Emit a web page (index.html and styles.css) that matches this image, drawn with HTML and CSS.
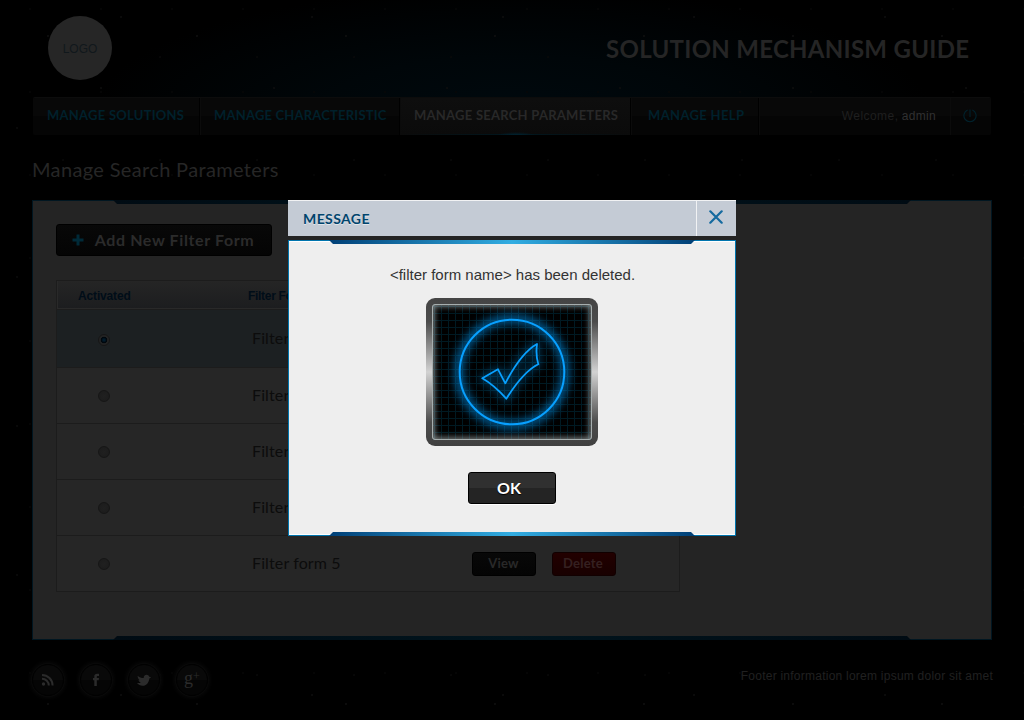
FILE: index.html
```html
<!DOCTYPE html>
<html lang="en">
<head>
<meta charset="utf-8">
<title>Solution Mechanism Guide</title>
<link rel="stylesheet" href="styles.css">
</head>
<body>
<div class="page">
  <header class="header">
    <div class="logo">LOGO</div>
    <h1 class="site-title">SOLUTION MECHANISM GUIDE</h1>
  </header>
  <nav class="nav">
    <a class="nav-item nav-solutions"><span>MANAGE SOLUTIONS</span></a>
    <a class="nav-item nav-characteristic"><span>MANAGE CHARACTERISTIC</span></a>
    <a class="nav-item nav-search active"><span>MANAGE SEARCH PARAMETERS</span></a>
    <a class="nav-item nav-help"><span>MANAGE HELP</span></a>
    <div class="welcome"><span class="greet">Welcome,</span> <b>admin</b></div>
    <a class="power" aria-label="Log out"><svg width="14" height="14" viewBox="0 0 14 14" fill="none" stroke="#00222d" stroke-width="1.1"><path d="M4.6 1.1A6.1 6.1 0 1 0 9.4 1.1M7 .5V8"/></svg></a>
  </nav>
  <h2 class="page-title">Manage Search Parameters</h2>
  <main class="panel">
    <button class="btn add"><svg width="12" height="12" viewBox="0 0 12 12"><path d="M4.500 .5h3v4H11.500v3H7.500v4h-3v-4H.5v-3h4z" fill="#002a38"/></svg><span>Add New Filter Form</span></button>
    <div class="table">
      <div class="row head"><span>Activated</span><span>Filter Form</span></div>
      <div class="row selected"><i class="radio on"></i><span class="name">Filter form 1</span></div>
      <div class="row"><i class="radio"></i><span class="name">Filter form 2</span></div>
      <div class="row"><i class="radio"></i><span class="name">Filter form 3</span></div>
      <div class="row"><i class="radio"></i><span class="name">Filter form 4</span></div>
      <div class="row last"><i class="radio"></i><span class="name">Filter form 5</span><button class="btn small view">View</button><button class="btn small delete">Delete</button></div>
    </div>
  </main>
  <footer class="footer">
    <div class="social">
      <a class="circle" aria-label="RSS"><svg width="14" height="14" viewBox="0 0 14 14"><circle cx="2.500" cy="11" r="1.700" fill="#2b2b2b"/><path d="M1 5.700A6.800 6.800 0 0 1 7.800 12.500M1 1.900A10.600 10.600 0 0 1 11.600 12.500" fill="none" stroke="#2b2b2b" stroke-width="2"/></svg></a>
      <a class="circle" aria-label="Facebook"><svg width="14" height="14" viewBox="0 0 14 14"><path d="M5.300 13V7.300H4V5h1.300V3.700C5.300 1.700 6.300.8 8.200.8H10V3H8.700C8 3 7.800 3.300 7.800 3.900V5H10L9.700 7.300H7.800V13z" fill="#2b2b2b"/></svg></a>
      <a class="circle" aria-label="Twitter"><svg width="16" height="14" viewBox="0 0 16 14"><path d="M.8 9.800c1.600.5 3 .3 4-.6C3.400 9 2.700 8.200 2.500 7.200h1.200C2.600 6.300 1.700 4.700 1.600 2.700 3.300 4.300 5.400 5 7.700 5.100 7.500 3.100 8.800 1.700 10.600 1.700c1.200 0 2.300.8 2.700 2l1.900.9-1.900.8C13 9.400 10.500 12.700 6.700 12.700 4.400 12.700 2.300 11.600.8 9.800z" fill="#2b2b2b"/></svg></a>
      <a class="circle gplus" aria-label="Google Plus"><span>g<sup>+</sup></span></a>
    </div>
    <p class="footnote">Footer information lorem ipsum dolor sit amet</p>
  </footer>
</div>

<div class="overlay">
  <section class="dialog" role="dialog">
    <div class="dialog-head">
      <h3>MESSAGE</h3>
      <a class="close" aria-label="Close"><svg width="14" height="14" viewBox="0 0 14 14"><path d="M1.300 1.300L12.700 12.700M12.700 1.300L1.300 12.700" stroke="#146a9f" stroke-width="2.200" fill="none" stroke-linecap="round"/></svg></a>
    </div>
    <div class="dialog-body">
      <p>&lt;filter form name&gt; has been deleted.</p>
      <svg class="monitor" width="172" height="148" viewBox="0 0 172 148">
        <defs>
          <linearGradient id="steel" x1="0" y1="0" x2="0" y2="1"><stop offset="0" stop-color="#444"/><stop offset=".16" stop-color="#4b4b4b"/><stop offset=".5" stop-color="#d2d2d2"/><stop offset=".84" stop-color="#4b4b4b"/><stop offset="1" stop-color="#404040"/></linearGradient>
          <pattern id="grid" x="1" y="1" width="7" height="7" patternUnits="userSpaceOnUse"><path d="M0 .5H7M.5 0V7" stroke="#001a23" stroke-width="1"/></pattern>
          <filter id="soft" x="-30%" y="-30%" width="160%" height="160%"><feGaussianBlur stdDeviation="5"/></filter>
          <filter id="edge" x="-10%" y="-10%" width="120%" height="120%"><feGaussianBlur stdDeviation="3"/></filter>
          <clipPath id="screen"><rect x="6" y="6" width="160" height="136" rx="3"/></clipPath>
        </defs>
        <rect width="172" height="148" rx="9" fill="url(#steel)"/>
        <g clip-path="url(#screen)">
          <rect x="6" y="6" width="160" height="136" fill="#000"/>
          <rect x="6" y="6" width="160" height="136" fill="url(#grid)"/>
          <circle cx="86" cy="74" r="53" fill="none" stroke="#0090e8" stroke-width="8" filter="url(#soft)" opacity=".72"/>
          <path d="M56.300 80.300L72 71.300L79.300 85.300Q95 55 111 46Q109.500 57 112.300 66.300Q98 73 80.300 100.700Q68 87 56.300 80.300Z" fill="none" stroke="#0090e8" stroke-width="4" filter="url(#soft)" opacity=".6"/>
          <rect x="5" y="5" width="162" height="138" rx="4" fill="none" stroke="#adb5b5" stroke-width="6" filter="url(#edge)" opacity=".85"/>
        </g>
        <rect x="6.500" y="6.500" width="159" height="135" rx="2.500" fill="none" stroke="#a6aeae"/>
        <circle cx="86" cy="74" r="52.300" fill="none" stroke="#08a0ff" stroke-width="2"/>
        <path d="M56.300 80.300L72 71.300L79.300 85.300Q95 55 111 46Q109.500 57 112.300 66.300Q98 73 80.300 100.700Q68 87 56.300 80.300Z" fill="none" stroke="#08a0ff" stroke-width="1.800" stroke-linejoin="round"/>
      </svg>
      <button class="btn ok">OK</button>
    </div>
  </section>
</div>
</body>
</html>
```
FILE: styles.css
```css
* { box-sizing: border-box; }
body {
  margin: 0;
  width: 1024px;
  height: 720px;
  overflow: hidden;
  font-family: Lato, sans-serif;
  background-color: #000;
  background-image:
    radial-gradient(circle at 48px 36px, #101010 0 .6px, transparent 1px),
    radial-gradient(circle at 101px 88px, #0e0e0e 0 .6px, transparent 1px),
    radial-gradient(circle at 17px 128px, #0c0c0c 0 .6px, transparent 1px),
    radial-gradient(circle at 121px 17px, #0e0e0e 0 .6px, transparent 1px),
    radial-gradient(circle at 63px 57px, #090909 0 .6px, transparent 1px),
    radial-gradient(circle at 30px 9px, #070707 0 .6px, transparent 1px),
    radial-gradient(ellipse 420px 125px at 512px 112px, #00090e 0, #000609 45%, transparent 100%);
  background-size: 149px 167px, 173px 131px, 131px 149px, 191px 113px, 97px 103px, 71px 83px, 1024px 97px;
  background-repeat: repeat, repeat, repeat, repeat, repeat, repeat, no-repeat;
}
h1, h2, h3, p { margin: 0; }
.page { padding: 0 32px; }
.header {
  height: 97px;
  padding: 16px 23px 0 16px;
  display: flex;
  justify-content: space-between;
}
.logo {
  width: 64px;
  height: 64px;
  border-radius: 50%;
  background: #262626;
  color: #11181c;
  font: 12px/66px "Liberation Sans", sans-serif;
  text-align: center;
}
.site-title {
  font-size: 24px;
  line-height: 65px;
  font-weight: 700;
  letter-spacing: .28px;
  margin-right: -.28px;
  color: #252525;
}
.nav {
  height: 38px;
  margin: 0 1px;
  display: flex;
  border-top: 1px solid #0c0c0c;
  border-radius: 2px;
  background: linear-gradient(#080808 0 50%, #050505 50% 100%);
}
.nav-item {
  border-right: 1px solid #0b0b0b;
  box-shadow: inset -1px 0 #000;
  padding-left: 14px;
  font-size: 13px;
  line-height: 35px;
  font-weight: 700;
  letter-spacing: .25px;
  color: #00202b;
  white-space: nowrap;
}
.nav-solutions { width: 168px; }
.nav-characteristic { width: 200px; padding-left: 13px; letter-spacing: .2px; }
.nav-search { width: 231px; padding-left: 13px; }
.nav-help { width: 128px; padding-left: 16px; letter-spacing: .35px; }
.nav-item.active {
  color: #282828;
  background:
    radial-gradient(ellipse 18px 3px at 50% 100%, #00222f, transparent),
    linear-gradient(90deg, transparent, #00171f 50%, transparent) bottom / 100% 1px no-repeat,
    linear-gradient(#0e0e0e, #0b0b0b);
}
.welcome {
  flex: 1;
  padding-right: 14px;
  text-align: right;
  font: 12px/36px "Liberation Sans", sans-serif;
  color: #1f1f1f;
  border-right: 1px solid #0b0b0b;
}
.greet { letter-spacing: .45px; }
.welcome b { font-weight: 400; color: #313131; letter-spacing: .3px; }
.power {
  width: 40px;
  padding: 0 2px 2px 0;
  display: flex;
  align-items: center;
  justify-content: center;
}
.page-title {
  height: 65px;
  font-size: 20px;
  line-height: 68px;
  font-weight: 400;
  letter-spacing: .35px;
  color: #262626;
}
.panel, .dialog-body { position: relative; border: 1px solid; }
.panel {
  height: 440px;
  padding: 23px;
  border-color: #001621;
  background: #242424;
}
.panel::before, .panel::after, .dialog-body::before, .dialog-body::after {
  content: "";
  position: absolute;
  height: 4px;
}
.panel::before, .panel::after {
  left: 80px;
  right: 80px;
  background: linear-gradient(90deg, #000b13, #00141d 50%, #000b13);
}
.panel::before, .dialog-body::before { top: -1px; clip-path: polygon(0 0, 100% 0, calc(100% - 4px) 100%, 4px 100%); }
.panel::after, .dialog-body::after { bottom: -1px; clip-path: polygon(4px 0, calc(100% - 4px) 0, 100% 100%, 0 100%); }
.btn {
  display: flex;
  align-items: center;
  justify-content: center;
  padding: 0 0 2px;
  border: 1px solid #000;
  border-radius: 3px;
  font-family: Lato, sans-serif;
  font-weight: 700;
}
.add {
  width: 216px;
  height: 32px;
  gap: 11px;
  padding: 0 2px 2px 0;
  font-size: 16px;
  letter-spacing: .62px;
  color: #2b2b2b;
  background: linear-gradient(#080808, #040404);
}
.add svg { margin-top: 1px; }
.table {
  width: 624px;
  margin-top: 24px;
  border: 1px solid #1c1c1c;
  background: #262626;
}
.row {
  height: 56px;
  padding-left: 41px;
  display: flex;
  align-items: center;
  border-bottom: 1px solid #1c1c1c;
}
.row.last { height: 55px; border-bottom: 0; }
.row.head {
  height: 29px;
  padding: 2px 0 0 22px;
  font: bold 12px "Liberation Sans", sans-serif;
  color: #000d18;
  background: linear-gradient(#252525, #1c1d1f);
  box-shadow: inset 1px -1px #292929;
}
.row.head span:first-child { width: 170px; margin-left: -1px; letter-spacing: -.15px; }
.row.head span:last-child { letter-spacing: -.3px; }
.row.selected { height: 58px; background: #1c2022; }
.radio {
  width: 12px;
  height: 12px;
  border: 1px solid #161616;
  border-radius: 50%;
  background: radial-gradient(circle, #202020, #1b1b1b);
}
.radio.on { margin-top: 2px; background: radial-gradient(circle, #001b2c 0 1px, #00070d 2.5px 3px, #232323 3.6px); }
.name {
  width: 220px;
  margin: -2px 0 0 142px;
  font-size: 16px;
  letter-spacing: .12px;
  color: #0c0c0c;
}
.small {
  width: 64px;
  height: 24px;
  font-size: 13px;
  letter-spacing: .25px;
  color: #292929;
  background: linear-gradient(#080808, #040404);
}
.view { padding-right: 1px; }
.delete { margin-left: 16px; padding-right: 2px; border-color: #110000; background: linear-gradient(#220000, #180000); color: #352020; }
.footer {
  height: 80px;
  display: flex;
  justify-content: space-between;
}
.social { display: flex; gap: 16px; padding-top: 24px; }
.circle {
  width: 32px;
  height: 32px;
  display: flex;
  align-items: center;
  justify-content: center;
  border: 1px solid #020202;
  border-radius: 50%;
  background: linear-gradient(#090909 50%, #050505 50%);
  box-shadow: 0 0 0 1px #090909, 0 0 5px 1px #0d0d0d;
}
.gplus { font: 18px/24px "Liberation Serif", serif; color: #2b2b2b; }
.gplus span { margin-top: -5px; }
.gplus sup { font-size: 12px; line-height: 0; vertical-align: 4px; }
.footnote {
  margin-right: -1px;
  font: 12px/72px "Liberation Sans", sans-serif;
  letter-spacing: .24px;
  color: #202020;
}
.overlay { position: absolute; inset: 0; padding-top: 200px; }
.dialog { width: 448px; margin: 0 auto; background: #242424; }
.dialog-head {
  height: 36px;
  margin-bottom: 4px;
  display: flex;
  border-top: 1px solid #f1f2f4;
  background: #c4cbd5;
}
.dialog-head h3 {
  flex: 1;
  padding-left: 15px;
  font-size: 14px;
  line-height: 36px;
  letter-spacing: .4px;
  color: #00446d;
  text-shadow: 0 1px #e1e6eb;
}
.close {
  width: 40px;
  padding: 0 1px 3px 0;
  display: flex;
  align-items: center;
  justify-content: center;
  border-left: 1px solid #f1f2f4;
}
.dialog-body {
  height: 296px;
  display: flex;
  flex-direction: column;
  align-items: center;
  border-color: #0075ae;
  background: #eee;
  box-shadow: inset 0 1px #fff, inset 0 -1px #fff;
}
.dialog-body::before, .dialog-body::after {
  left: 40px;
  right: 40px;
  background: linear-gradient(90deg, #003f76, #32ade2 50%, #003f76);
}
.dialog-body p {
  height: 57px;
  padding-left: 1px;
  font: 15px/68px "Liberation Sans", sans-serif;
  color: #333;
  white-space: nowrap;
}
.monitor { display: block; }
.ok {
  width: 88px;
  height: 32px;
  margin-top: 26px;
  padding-right: 6px;
  font-size: 16px;
  color: #fff;
  text-shadow: 0 1px 1px #000;
  background: linear-gradient(#303030 0 50%, #242424 50% 100%);
  box-shadow: 0 1px #fff;
}
```
